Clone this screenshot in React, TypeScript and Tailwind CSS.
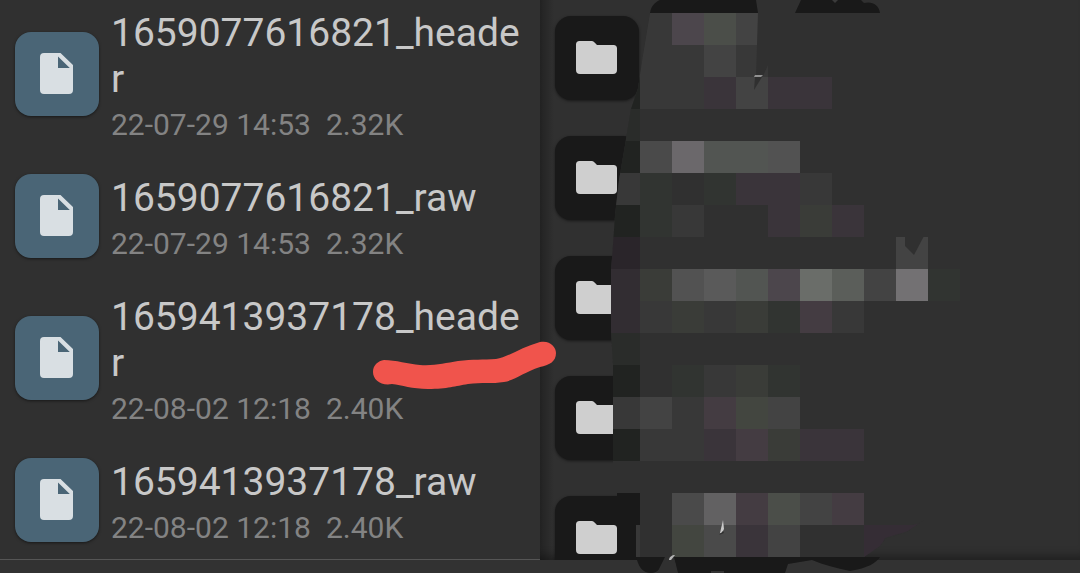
interface FileEntry {
  name: string;
  date: string;
  size: string;
}

const files: FileEntry[] = [
  { name: '1659077616821_header', date: '22-07-29 14:53', size: '2.32K' },
  { name: '1659077616821_raw', date: '22-07-29 14:53', size: '2.32K' },
  { name: '1659413937178_header', date: '22-08-02 12:18', size: '2.40K' },
  { name: '1659413937178_raw', date: '22-08-02 12:18', size: '2.40K' },
];

const folders = [1, 2, 3, 4, 5];

const CELL = 32;
const MOSAIC_X = 608;
const MOSAIC_Y = 13;

const palette: Record<string, string> = {
  a: '#191919',
  b: '#212321',
  c: '#2a2c2a',
  d: '#2a252a',
  e: '#322d32',
  f: '#313431',
  g: '#383838',
  h: '#3a3c38',
  i: '#3a343a',
  j: '#434343',
  k: '#443c42',
  l: '#434640',
  m: '#4a4a4a',
  n: '#4c464c',
  o: '#4b4e49',
  p: '#525552',
  q: '#525252',
  r: '#5a5a5a',
  s: '#5b5e5a',
  t: '#626162',
  u: '#6b686b',
  v: '#6a6d69',
  w: '#737173',
};

// one string per row of cells, a dot leaves the backdrop visible
const mosaic = [
  '.gnoj......',
  '.ggjg......',
  'bggijii....',
  'c..........',
  'bmuppq.....',
  'gf.fiig....',
  'bfg..ihi...',
  'd........j.',
  'ehqrpnvsjwf',
  'eghghfkg...',
  'c..........',
  'b.fghf.....',
  'gjgklj.....',
  'bggikhii...',
  '...........',
  'a.mtkojk...',
  'g.lmij.....',
];

function FileIcon() {
  return (
    <svg width="34" height="42" viewBox="0 0 34 42" aria-hidden="true">
      <path fillRule="evenodd" fill="#d9dfe3"
        d="M4 0H20.5L33 12V37a4 4 0 0 1-4 4H4a4 4 0 0 1-4-4V4a4 4 0 0 1 4-4ZM18 3.500V15H29.800Z" />
    </svg>
  );
}

function FolderIcon() {
  return (
    <svg width="42" height="34" viewBox="0 0 42 34" aria-hidden="true">
      <path fill="#cfcfcf"
        d="M3.500 0H15.500a4 4 0 0 1 2.800 1.200L21 4H37.500a3.500 3.500 0 0 1 3.500 3.500V29a4 4 0 0 1-4 4H4a4 4 0 0 1-4-4V3.500A3.500 3.500 0 0 1 3.500 0Z" />
    </svg>
  );
}

function FileRow({ file }: { file: FileEntry }) {
  return (
    <li>
      <button type="button" className="flex w-full items-center gap-3 pl-[15px] pr-3 text-left">
        <span className="flex size-[84px] shrink-0 items-center justify-center rounded-2xl bg-[#4a6576] shadow-[0_1px_3px_rgba(0,0,0,0.5)]">
          <FileIcon />
        </span>
        <span className="block min-w-0 pt-[19px] pb-[13px]">
          <span className="block break-all text-[39px] leading-[46px] text-[#c8c8c8]">{file.name}</span>
          <span className="mt-[5px] flex gap-[15px] text-[30px] leading-9 text-[#838383]">
            <span>{file.date}</span>
            <span>{file.size}</span>
          </span>
        </span>
      </button>
    </li>
  );
}

function Doodles() {
  return (
    <svg className="pointer-events-none absolute top-0 left-0" width="1080" height="573" viewBox="0 0 1080 573" aria-hidden="true">
      <defs>
        <clipPath id="brush">
          <path d="M650 13L643 55L638 88L631 109L625 145L619 180L615 215L613 245L611 270L611 330L613 365L613 461L613 493H617V525H636V557H864L880 546L885 539L905 533L924 520L960 520V13Z" />
        </clipPath>
      </defs>

      {/* brush blobs along the top */}
      <path fill="#191919" d="M650 13C651 6 655 2 660 0H756L758 13Z" />
      <path fill="#191919" d="M795 13L801 0H861L864 3C872 1 879 5 880 13Z" />
      <path fill="#3a3a3a" d="M832 0H838L835 3Z" />

      <g clipPath="url(#brush)">
        <rect x="608" y="13" width="352" height="544" fill="#303030" />
        {mosaic.map((row, y) =>
          row.split('').map((key, x) =>
            key === '.' ? null : (
              <rect key={`${x}-${y}`} x={MOSAIC_X + x * CELL} y={MOSAIC_Y + y * CELL}
                width={CELL} height={CELL} fill={palette[key]} shapeRendering="crispEdges" />
            ),
          ),
        )}
        <path fill="#352d35" d="M864 525H912L922 523L912 530L885 538L879 557H864Z" />
      </g>

      {/* unpainted slivers */}
      <path fill="#303030" d="M758 13H768V65L763 76L756 76Z" />
      <path fill="#929292" d="M755 75H763L761 77H754Z" />
      <path fill="#303030" d="M755 77H762L754 90Z" />
      <path fill="#303030" d="M905 236H924L914 255L905 246Z" />
      <path fill="#c9c9c9" d="M723 520L724 529L722 533H720Z" />
      <path fill="#303030" d="M723 531L719 535L724 533Z" />

      {/* brush blobs along the bottom */}
      <path fill="#191919" d="M636 557H666C663 566 659 573 651 573C643 573 639 567 637 560Z" />
      <path fill="#191919" d="M674 557H880C876 563 868 568 850 571C836 568 824 565 812 560L788 564L785 573H678Z" />
      <path fill="#303030" d="M665 557H674L677 573H657Z" />
      <path fill="#b5b5b5" d="M669 560C669 557 672 555 675 555L671 560Z" />
      <path fill="#333333" d="M711 573V571H724V573Z" />

      <path fill="#f0544c"
        d="M384 360C396 360 408 364 420 365C435 366 445 363 458 361C473 359 483 360 496 359C508 357 522 347 540 342C550 340 556 347 556 353C556 362 549 365 540 367C524 372 516 380 504 382C492 384 482 382 468 384C455 386 448 389 428 389C412 389 402 385 392 384C381 386 373 380 373 372C373 365 378 361 384 360Z" />
    </svg>
  );
}

export default function App() {
  return (
    <div className="relative flex h-screen flex-col overflow-hidden bg-[#303030] font-['Roboto',sans-serif]">
      <main className="flex min-h-0 flex-1">
        <section className="w-1/2 overflow-hidden border-b border-[#555555]" aria-label="Files">
          <ul className="-mt-[9px]">
            {files.map((file) => (
              <FileRow key={file.name} file={file} />
            ))}
          </ul>
        </section>

        <section className="w-1/2 overflow-hidden bg-linear-to-r from-[#232323] to-[#303030] to-[14px] shadow-[inset_0_-12px_10px_-8px_rgba(0,0,0,0.35)]" aria-label="Folders">
          <ul className="-mt-0.5">
            {folders.map((id) => (
              <li key={id}>
                <button type="button" aria-label={`Folder ${id}`} className="block w-full py-[18px] pl-[15px]">
                  <span className="flex size-[84px] items-center justify-center rounded-2xl bg-[#191919] shadow-[0_1px_3px_rgba(0,0,0,0.5)]">
                    <FolderIcon />
                  </span>
                </button>
              </li>
            ))}
          </ul>
        </section>
      </main>
      <footer className="h-[13px] shrink-0 bg-[#323232]" />
      <Doodles />
    </div>
  );
}
